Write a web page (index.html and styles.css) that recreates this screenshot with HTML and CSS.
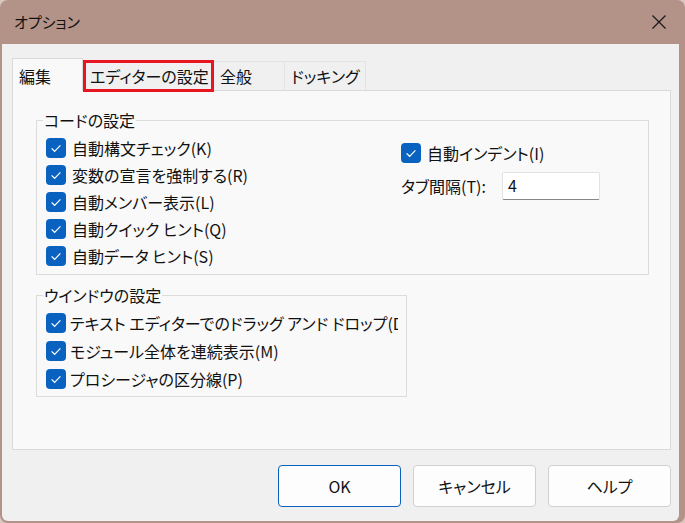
FILE: index.html
```html
<!DOCTYPE html>
<html lang="ja">
<head>
<meta charset="utf-8">
<title>オプション</title>
<link rel="stylesheet" href="styles.css">
</head>
<body>
<div class="window">
  <div class="titlebar">
    <span class="title">オプション</span>
    <svg class="close" width="16" height="16" viewBox="0 0 16 16"><path d="M1.5 1.5 L14.5 14.5 M14.5 1.5 L1.5 14.5" stroke="#1b1b1b" stroke-width="1.3" fill="none"/></svg>
  </div>
  <div class="client">
    <div class="tabs">
      <div class="tab active">編集</div>
      <div class="tab marked">エディターの設定</div>
      <div class="tab">全般</div>
      <div class="tab">ドッキング</div>
    </div>
    <div class="panel">
      <fieldset class="group group-code">
        <legend>コードの設定</legend>
        <div class="cols">
          <div class="col-left">
            <div class="check"><span class="box"><svg width="20" height="20" viewBox="0 0 20 20"><path d="M5.6 10.4 L8.6 13.3 L14.4 7.4" stroke="#fff" stroke-width="1.2" fill="none"/></svg></span><span class="label">自動構文チェック(K)</span></div>
            <div class="check"><span class="box"><svg width="20" height="20" viewBox="0 0 20 20"><path d="M5.6 10.4 L8.6 13.3 L14.4 7.4" stroke="#fff" stroke-width="1.2" fill="none"/></svg></span><span class="label">変数の宣言を強制する(R)</span></div>
            <div class="check"><span class="box"><svg width="20" height="20" viewBox="0 0 20 20"><path d="M5.6 10.4 L8.6 13.3 L14.4 7.4" stroke="#fff" stroke-width="1.2" fill="none"/></svg></span><span class="label">自動メンバー表示(L)</span></div>
            <div class="check"><span class="box"><svg width="20" height="20" viewBox="0 0 20 20"><path d="M5.6 10.4 L8.6 13.3 L14.4 7.4" stroke="#fff" stroke-width="1.2" fill="none"/></svg></span><span class="label">自動クイック ヒント(Q)</span></div>
            <div class="check"><span class="box"><svg width="20" height="20" viewBox="0 0 20 20"><path d="M5.6 10.4 L8.6 13.3 L14.4 7.4" stroke="#fff" stroke-width="1.2" fill="none"/></svg></span><span class="label">自動データ ヒント(S)</span></div>
          </div>
          <div class="col-right">
            <div class="check indent"><span class="box"><svg width="20" height="20" viewBox="0 0 20 20"><path d="M5.6 10.4 L8.6 13.3 L14.4 7.4" stroke="#fff" stroke-width="1.2" fill="none"/></svg></span><span class="label">自動インデント(I)</span></div>
            <div class="tabwidth">
              <span class="tabwidth-label">タブ間隔(T):</span>
              <span class="input">4</span>
            </div>
          </div>
        </div>
      </fieldset>
      <fieldset class="group group-window">
        <legend>ウインドウの設定</legend>
        <div class="check"><span class="box"><svg width="20" height="20" viewBox="0 0 20 20"><path d="M5.6 10.4 L8.6 13.3 L14.4 7.4" stroke="#fff" stroke-width="1.2" fill="none"/></svg></span><span class="label">テキスト エディターでのドラッグ アンド ドロップ(D)</span></div>
        <div class="check"><span class="box"><svg width="20" height="20" viewBox="0 0 20 20"><path d="M5.6 10.4 L8.6 13.3 L14.4 7.4" stroke="#fff" stroke-width="1.2" fill="none"/></svg></span><span class="label">モジュール全体を連続表示(M)</span></div>
        <div class="check"><span class="box"><svg width="20" height="20" viewBox="0 0 20 20"><path d="M5.6 10.4 L8.6 13.3 L14.4 7.4" stroke="#fff" stroke-width="1.2" fill="none"/></svg></span><span class="label">プロシージャの区分線(P)</span></div>
      </fieldset>
    </div>
    <div class="buttons">
      <button class="btn default">OK</button>
      <button class="btn">キャンセル</button>
      <button class="btn">ヘルプ</button>
    </div>
  </div>
</div>
</body>
</html>
```

FILE: styles.css
```css
* { box-sizing: border-box; }
html, body {
  margin: 0;
  padding: 0;
  background: #d9c7c0;
}
body {
  font-family: "Noto Sans CJK JP", "Noto Sans", sans-serif;
  font-feature-settings: "palt";
  color: #111;
  font-size: 16px;
}
.window {
  width: 685px;
  height: 523px;
  background: #b39288;
  border-radius: 8px 8px 8px 8px;
  padding: 0 6px 2px 2px;
  display: flex;
  flex-direction: column;
}
.titlebar {
  height: 44px;
  display: flex;
  align-items: center;
  justify-content: space-between;
  padding-left: 12px;
  padding-right: 12px;
  flex: none;
}
.title {
  font-size: 15px;
  line-height: 16px;
  color: #111;
  margin-top: -1px;
}
.close {
  display: block;
  margin-top: -1px;
}
.client {
  flex: 1;
  background: #f0f0f0;
  border-radius: 0 0 6px 6px;
  padding: 14px 8px 0 10px;
}
.tabs {
  display: flex;
  align-items: flex-end;
  height: 32px;
  position: relative;
  z-index: 2;
}
.tab {
  min-width: 72px;
  height: 29px;
  padding: 6px 6px 0 6px;
  line-height: 16px;
  font-size: 16px;
  background: #f0f0f0;
  border: 1px solid #e3e3e3;
  border-bottom: none;
  white-space: nowrap;
}
.tab + .tab { margin-left: -1px; }
.tab.active {
  width: 71px;
  min-width: 71px;
  height: 33px;
  padding-top: 9px;
  margin-bottom: -1px;
  background: #f9f9f9;
  border-color: #dadada;
}
.tab.marked {
  width: 131px;
  position: relative;
  margin-left: 0;
}
.tab.marked::after {
  content: "";
  position: absolute;
  left: -1px;
  top: -2px;
  right: -1px;
  bottom: -2px;
  border: 3px solid #e8141f;
}
.panel {
  height: 360px;
  background: #f9f9f9;
  border: 1px solid #dadada;
  padding: 21px 22px 0 23px;
  position: relative;
  z-index: 1;
}
.group {
  margin: 0;
  border: 1px solid #dcdcdc;
  padding: 6px 8px 0 9px;
  min-width: 0;
}
.group legend {
  padding: 0 1px;
  margin-left: -3px;
  line-height: 16px;
  font-size: 16px;
}
.group-code {
  width: 613px;
  height: 163px;
}
.group-window {
  width: 371px;
  height: 110px;
  margin-top: 12px;
}
.cols {
  display: flex;
}
.col-left {
  width: 355px;
  flex: none;
}
.col-right {
  padding-top: 5px;
}
.check {
  display: flex;
  align-items: center;
  height: 27px;
  gap: 6px;
  white-space: nowrap;
  overflow: hidden;
}
.group-window .check {
  height: 28px;
  gap: 4px;
}
.box {
  width: 20px;
  height: 20px;
  flex: none;
  background: #0a62c0;
  border-radius: 4px;
  display: block;
}
.box svg { display: block; }
.label {
  font-size: 16px;
  line-height: 20px;
}
.tabwidth {
  display: flex;
  align-items: center;
  margin-top: 6px;
  height: 28px;
}
.tabwidth-label {
  width: 101px;
  flex: none;
  font-size: 16px;
}
.input {
  width: 98px;
  height: 28px;
  background: #fff;
  border: 1px solid #e3e3e3;
  border-bottom: 1px solid #878787;
  border-radius: 2px;
  padding-left: 5px;
  line-height: 24px;
  font-size: 16px;
}
.buttons {
  display: flex;
  justify-content: flex-end;
  gap: 12px;
  margin-top: 15px;
}
.btn {
  width: 123px;
  height: 42px;
  background: #fdfdfd;
  border: 1px solid #d0d0d0;
  border-radius: 4px;
  font-family: "Noto Sans CJK JP", "Noto Sans", sans-serif;
  font-feature-settings: "palt";
  font-size: 16px;
  color: #111;
  padding: 0;
}
.btn.default {
  border-color: #0a62c0;
}
```
